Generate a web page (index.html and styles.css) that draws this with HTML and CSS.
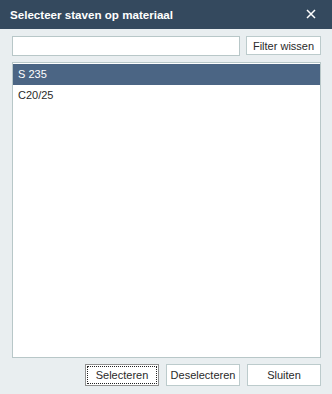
FILE: index.html
```html
<!DOCTYPE html>
<html>
<head>
<meta charset="utf-8">
<link rel="stylesheet" href="styles.css">
</head>
<body>
<div class="dialog">
  <div class="titlebar">
    <span class="title">Selecteer staven op materiaal</span>
    <span class="close">
      <svg width="10" height="10" viewBox="0 0 10 10"><path d="M1 1 L9 9 M9 1 L1 9" stroke="#ffffff" stroke-width="1.5" fill="none"/></svg>
    </span>
  </div>
  <div class="content">
    <div class="filterrow">
      <input class="filter" type="text">
      <button class="btn filterbtn">Filter wissen</button>
    </div>
    <div class="list">
      <div class="row selected">S 235</div>
      <div class="row">C20/25</div>
    </div>
    <div class="actions">
      <button class="btn focused">Selecteren</button>
      <button class="btn">Deselecteren</button>
      <button class="btn">Sluiten</button>
    </div>
  </div>
</div>
</body>
</html>
```
FILE: styles.css
```css
html, body {
  margin: 0;
  padding: 0;
  background: #e9eef0;
  font-family: "Liberation Sans", "DejaVu Sans", sans-serif;
  font-size: 11px;
  color: #2a2a2a;
}
.dialog {
  width: 332px;
  height: 394px;
  display: flex;
  flex-direction: column;
}
.titlebar {
  height: 29px;
  background: #34495e;
  display: flex;
  align-items: center;
  justify-content: space-between;
  padding: 0 16px 0 10px;
  color: #fff;
}
.title {
  font-weight: bold;
  font-size: 11.6px;
  margin-top: -1px;
}
.close {
  display: flex;
  margin-top: -2px;
}
.content {
  padding: 7px 11px 0 12px;
  display: flex;
  flex-direction: column;
}
.filterrow {
  display: flex;
  gap: 6px;
  height: 20px;
}
.filter {
  flex: 1;
  margin: 0;
  box-sizing: border-box;
  height: 20px;
  border: 1px solid #b8c7c8;
  background: #fff;
  outline: none;
  padding: 0 3px;
}
.btn {
  box-sizing: border-box;
  width: 75px;
  margin: 0;
  padding: 0;
  background: #fff;
  border: 1px solid #bccbcc;
  font-family: "Liberation Sans", "DejaVu Sans", sans-serif;
  font-size: 11px;
  color: #2a2a2a;
}
.filterbtn {
  height: 19px;
}
.list {
  margin-top: 6px;
  height: 296px;
  box-sizing: border-box;
  border: 1px solid #b8c7c8;
  background: #fff;
  padding-top: 1px;
}
.row {
  height: 21px;
  line-height: 21px;
  padding-left: 5px;
}
.row.selected {
  background: #4b6584;
  color: #fff;
}
.actions {
  margin-top: 6px;
  display: flex;
  justify-content: flex-end;
  gap: 7px;
}
.actions .btn {
  width: 74px;
  height: 22px;
}
.btn.focused {
  border: 1px solid #8f8f8f;
  outline: 1px dotted #222;
  outline-offset: -3px;
}
```
